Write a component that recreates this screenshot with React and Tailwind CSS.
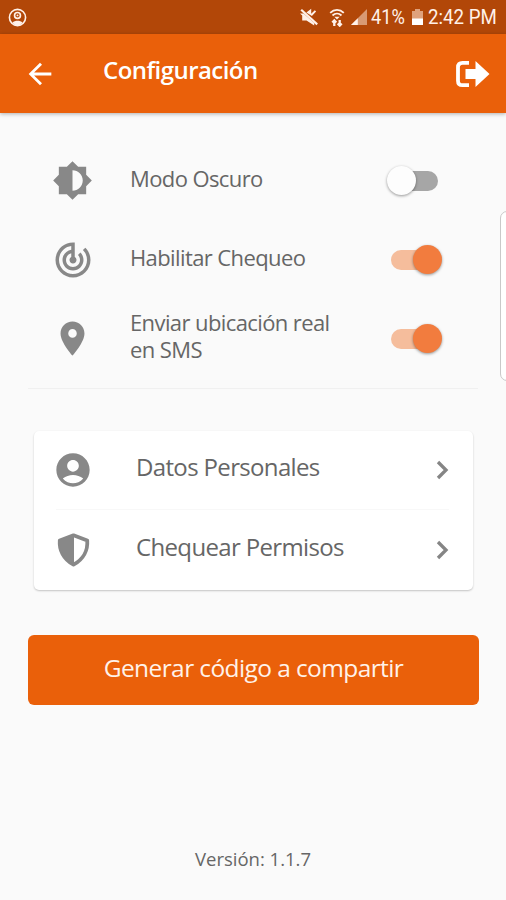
import React, { useState } from 'react';
import {
    MdAccountCircle,
    MdArrowBack,
    MdBrightness6,
    MdLocationOn,
    MdTrackChanges,
} from 'react-icons/md';

const StatusBar = () => (
    <div className="flex h-[34px] items-center justify-between bg-[#b24708] pl-2 pr-[9px] text-[#fff1e9]">
        <svg className="size-[19px]" viewBox="0 0 20 20" fill="none" stroke="currentColor" strokeWidth="1.7">
            <circle cx="10" cy="10" r="8.5" />
            <circle cx="10" cy="7.8" r="3.1" />
            <circle cx="10" cy="7.8" r="1" fill="currentColor" stroke="none" />
            <path d="M4.5 15.6c1.6-1.8 3.4-2.2 5.5-2.2s3.9.4 5.5 2.2l-3.1 2.2H7.6z" fill="currentColor" stroke="none" />
        </svg>
        <div className="flex items-center">
            <svg className="mr-[11px] h-[19px] w-[18px]" viewBox="0 0 18 19" fill="currentColor">
                <path d="M0 5.6h3.6L14.2 15v2.4L6.5 12.6H2.2V7.5z" />
                <path d="M6.4 4.6l4.8-3.8v4.9l3.6-3.4 1.3 1.2-4.2 4.6z" />
                <path d="M1.2 1.8L17.2 16.4" stroke="currentColor" strokeWidth="2.2" />
            </svg>
            <svg className="mr-[5px] h-[19px] w-4" viewBox="0 0 16 19" fill="none" stroke="currentColor">
                <path d="M1.2 4.800c4-4 9.600-4 13.600 0" strokeWidth="1.8" />
                <path d="M3.5 7.500c2.600-2.400 6.400-2.400 9 0" strokeWidth="1.8" />
                <path d="M5.400 8.800h5.200L8 11.500z" fill="currentColor" stroke="none" />
                <path d="M5.300 18v-5M3.300 14.600l2-2.200 2 2.200M10.700 12v5M8.700 15.400l2 2.200 2-2.200" strokeWidth="2.300" />
            </svg>
            <svg className="mr-1.5 size-[18px]" viewBox="0 0 18 18">
                <path d="M1 17L17 1v16z" fill="#d89a74" />
                <path d="M1 17l6.8-6.8V17z" fill="currentColor" />
            </svg>
            <span className="w-[38px] font-[Roboto,sans-serif] text-[21px] leading-none">
                <span className="inline-block origin-left -translate-x-[3px] scale-x-[0.87]">41%</span>
            </span>
            <svg className="-ml-px mr-1 h-[18px] w-[13px]" viewBox="0 0 13 18">
                <path d="M1 3h3V1h5v2h3v14H1z" fill="#dfa17c" />
                <path d="M1 10.5h11V17H1z" fill="#fff" />
            </svg>
            <span className="w-[69px] font-[Roboto,sans-serif] text-[21px] leading-none whitespace-nowrap">
                <span className="inline-block origin-left scale-x-[0.89]">2:42 PM</span>
            </span>
        </div>
    </div>
);

const Header = () => (
    <header className="relative flex h-[79px] items-center bg-[#ea600a] pl-[23px] pr-4 text-white shadow-[0_1px_4px_rgba(0,0,0,0.3)]">
        <button className="mr-[46px]" aria-label="Volver">
            <MdArrowBack className="size-[34px]" />
        </button>
        <h1 className="flex-1 pb-2 text-[24px] font-semibold tracking-[-0.55px] whitespace-nowrap">Configuración</h1>
        <button aria-label="Salir">
            <svg className="h-7 w-[34px]" viewBox="0 0 34 28">
                <path d="M13 2.800H6.500Q2 2.800 2 7.300v13.400Q2 25.200 6.500 25.200H13" fill="none" stroke="#fff" strokeWidth="3.8" />
                <path d="M9.500 9H19.500V1L33.500 14 19.500 27V19H9.500z" fill="#fff" />
            </svg>
        </button>
    </header>
);

const Toggle = ({ checked, onChange, label }) => (
    <button
        role="switch"
        aria-checked={checked}
        aria-label={label}
        onClick={onChange}
        className={`flex h-5 w-[47px] shrink-0 items-center rounded-full ${checked ? 'justify-end bg-[#f5bd9c]' : 'bg-[#a6a6a6]'}`}
    >
        <span
            className={`size-[29px] shrink-0 rounded-full shadow-[0_1px_3px_rgba(0,0,0,0.4)] ${
                checked ? 'translate-x-1 bg-[#f27c3e]' : '-translate-x-1 bg-[#fdfdfd]'
            }`}
        />
    </button>
);

const SettingRow = ({ icon: Icon, label, checked, onChange, iconClass }) => (
    <div className="flex h-[79px] items-center">
        <div className="flex w-[78px] justify-start">
            <Icon className={`text-[#888] ${iconClass}`} />
        </div>
        <div className="w-[261px] pb-[5px] text-[22px] leading-[27px] tracking-[-0.6px] whitespace-pre-line">{label}</div>
        <Toggle checked={checked} onChange={onChange} label={label} />
    </div>
);

const ShieldHalf = ({ className }) => (
    <svg className={className} viewBox="0 0 36 38">
        <path d="M18 3.5L32.5 9c.7 9.500-3.500 19.500-14.500 25.500C7 28.500 2.800 18.500 3.500 9z" fill="none" stroke="currentColor" strokeWidth="4" strokeLinejoin="round" />
        <path d="M18.500 3.500v31C7 28.500 2.800 18.500 3.500 9z" fill="currentColor" />
    </svg>
);

const Chevron = () => (
    <svg className="h-5 w-[13px] text-[#858585]" viewBox="0 0 13 20" fill="none" stroke="currentColor" strokeWidth="3.3">
        <path d="M2 2l8 8-8 8" />
    </svg>
);

const MenuRow = ({ icon: Icon, iconClass, label }) => (
    <button className="flex h-full w-full items-center text-left">
        <span className="w-[80px]">
            <Icon className={`text-[#888] ${iconClass}`} />
        </span>
        <span className="flex-1 pb-1.5 text-[24px] tracking-[-0.65px] whitespace-nowrap">{label}</span>
        <Chevron />
    </button>
);

const App = () => {
    const [darkMode, setDarkMode] = useState(false);
    const [checkEnabled, setCheckEnabled] = useState(true);
    const [realLocation, setRealLocation] = useState(true);

    return (
        <div className="flex h-[900px] w-[506px] flex-col overflow-hidden bg-[#fafafa] font-['Open_Sans','Noto_Sans',sans-serif] text-[#666]">
            <StatusBar />
            <Header />

            <main className="relative flex flex-1 flex-col">
                {/* Edge panel handle */}
                <div className="absolute top-[98px] left-[500px] h-[170px] w-4 rounded-[7px] border border-[#c9c9c9] bg-white" />

                <section className="mx-7 mt-[28px] flex h-[248px] flex-col border-b border-[#f0f0f0] pl-6">
                    <SettingRow
                        icon={MdBrightness6}
                        iconClass="size-[41px]"
                        label="Modo Oscuro"
                        checked={darkMode}
                        onChange={() => setDarkMode(!darkMode)}
                    />
                    <SettingRow
                        icon={MdTrackChanges}
                        iconClass="size-[42px]"
                        label="Habilitar Chequeo"
                        checked={checkEnabled}
                        onChange={() => setCheckEnabled(!checkEnabled)}
                    />
                    <SettingRow
                        icon={MdLocationOn}
                        iconClass="size-[41px]"
                        label={'Enviar ubicación real\nen SMS'}
                        checked={realLocation}
                        onChange={() => setRealLocation(!realLocation)}
                    />
                </section>

                <section className="mr-[33px] ml-[34px] mt-[42px] h-[159px] rounded-[5px] bg-white pr-6 pl-[22px] shadow-[0_1px_2px_rgba(0,0,0,0.22)]">
                    <div className="h-[79px] border-b border-[#f8f8f8]">
                        <MenuRow icon={MdAccountCircle} iconClass="-ml-[3px] size-[40px]" label="Datos Personales" />
                    </div>
                    <div className="h-20">
                        <MenuRow icon={ShieldHalf} iconClass="h-[36px] w-[35px]" label="Chequear Permisos" />
                    </div>
                </section>

                <button className="mr-[27px] ml-[28px] mt-[45px] h-[70px] rounded-[6px] bg-[#ea600a] pb-1 text-[24.5px] tracking-[-0.6px] whitespace-nowrap text-[#fff2e9]">
                    Generar código a compartir
                </button>

                <p className="mt-auto pb-[27px] text-center text-[18.5px]">Versión: 1.1.7</p>
            </main>
        </div>
    );
};

export default App;
